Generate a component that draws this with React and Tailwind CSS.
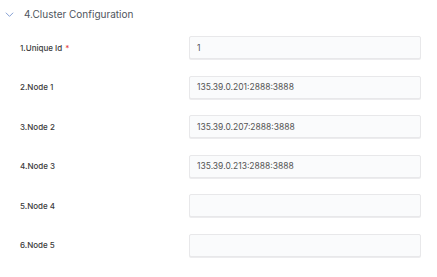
import React from 'react'

const rows = [
  { label: '1.Unique Id', required: true, value: '1' },
  { label: '2.Node 1', value: '135.39.0.201:2888:3888' },
  { label: '3.Node 2', value: '135.39.0.207:2888:3888' },
  { label: '4.Node 3', value: '135.39.0.213:2888:3888' },
  { label: '5.Node 4', value: '' },
  { label: '6.Node 5', value: '' },
]

export default function App() {
  return (
    <div className="w-[437px] h-[277px] bg-white overflow-hidden" style={{ fontFamily: 'Inter, "Noto Sans", sans-serif' }}>
      <div className="flex items-center h-[28px] pl-[5px] pt-[1px]">
        <svg className="w-[9px] h-[9px] text-[#6b8cc9]" viewBox="0 0 24 24" fill="none" stroke="currentColor" strokeWidth={2.2} strokeLinecap="round" strokeLinejoin="round">
          <path d="M3 8l9 9 9-9" />
        </svg>
        <span className="ml-[10px] text-[10px] text-[#4f555d]">4.Cluster Configuration</span>
      </div>
      <div className="flex flex-col gap-[16.6px] pt-[8px]">
        {rows.map(row => (
          <div key={row.label} className="flex items-center h-[23px]">
            <div className="w-[189px] pl-[20px] text-[8px] font-medium text-[#3a3a3a]">
              {row.label}
              {row.required && <span className="text-[#e53e3e] ml-[3px]">*</span>}
            </div>
            <input
              readOnly
              value={row.value}
              className="w-[232px] h-[23px] px-[7px] bg-[#fafbfc] border border-[#e8e8ea] rounded-[2px] shadow-[0_1px_0_#ececee] text-[8.5px] text-[#555] outline-none"
            />
          </div>
        ))}
      </div>
    </div>
  )
}
